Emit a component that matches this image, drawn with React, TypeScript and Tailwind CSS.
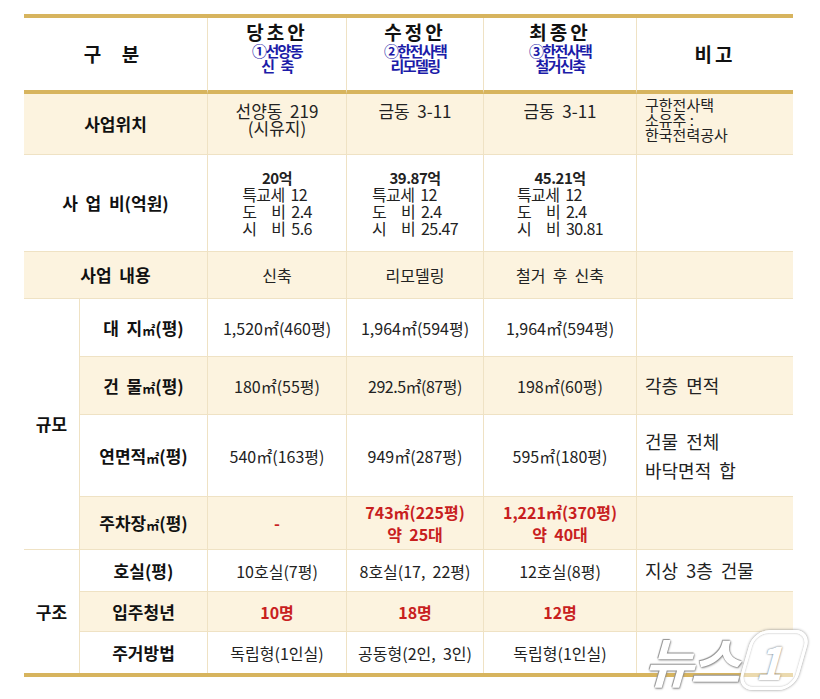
import type { ReactNode } from "react";

const KR = "font-['Noto_Sans_CJK_KR','Noto_Sans',sans-serif]";

interface CellProps {
  children?: ReactNode;
  className?: string;
}

function Cell({ children, className = "" }: CellProps) {
  return (
    <div
      className={`flex flex-col items-center justify-center border-r border-b border-[#efe2c4] text-center ${className}`}
    >
      {children}
    </div>
  );
}

function Head({ title, sub }: { title: string; sub: string[] }) {
  return (
    <Cell className="justify-start border-b-[4px] border-b-[#d7b45e] bg-white pt-[3px]">
      <span className="text-[19px] font-bold leading-[22px] tracking-[3px] text-[#111]">
        {title}
      </span>
      {sub.map((s) => (
        <span
          key={s}
          className="text-[15px] font-bold leading-[15px] tracking-[-1.6px] text-[#1c1ca8]"
        >
          {s}
        </span>
      ))}
    </Cell>
  );
}

function Cost({ total, city }: { total: string; city: string }) {
  return (
    <Cell className="bg-white text-[#222]">
      <span className="text-[15px] font-bold leading-[17px] tracking-[-0.5px]">
        {total}
      </span>
      <div className="whitespace-pre text-left text-[16px] leading-[17px] tracking-[-0.6px]">
        <div>{"특교세  12"}</div>
        <div>{"도     비  2.4"}</div>
        <div>{`시     비  ${city}`}</div>
      </div>
    </Cell>
  );
}

const label = "text-[17px] font-bold text-[#111]";
const val = "text-[16px] text-[#222]";
const red = "text-[16px] font-bold leading-[22px] text-[#c8201e]";
const beige = "bg-[#fcf3df]";

export default function App() {
  return (
    <div className={`relative h-[699px] w-[820px] bg-white ${KR}`}>
      <div className="pl-[24px] pt-[14px]">
        <div className="grid w-[769px] grid-cols-[56px_128px_139px_137px_153px_156px] grid-rows-[76px_61px_97px_47px_58px_58px_82px_53px_42px_40px_41px] border-y-[4px] border-[#d7b45e]">
          {/* header */}
          <Cell className="col-span-2 border-b-[4px] border-b-[#d7b45e] bg-white">
            <span className="text-[19px] font-bold tracking-[8px] text-[#111]">
              구 분
            </span>
          </Cell>
          <Head title="당초안" sub={["①선양동", "신\u00a0\u00a0\u00a0\u00a0축"]} />
          <Head title="수정안" sub={["②한전사택", "리모델링"]} />
          <Head title="최종안" sub={["③한전사택", "철거신축"]} />
          <Cell className="border-r-0 border-b-[4px] border-b-[#d7b45e] bg-white">
            <span className="text-[19px] font-bold tracking-[3px] text-[#111]">
              비고
            </span>
          </Cell>

          {/* 사업위치 */}
          <Cell className={`col-span-2 ${beige}`}>
            <span className={label}>사업위치</span>
          </Cell>
          <Cell className={`${beige} justify-start pt-[8px] text-[17px] leading-[17px] text-[#222]`}>
            <span>선양동&nbsp;&nbsp;219</span>
            <span>(시유지)</span>
          </Cell>
          <Cell className={`${beige} justify-start pt-[8px] text-[17px] leading-[17px] text-[#222]`}>
            금동&nbsp;&nbsp;3-11
          </Cell>
          <Cell className={`${beige} justify-start pt-[8px] text-[17px] leading-[17px] text-[#222]`}>
            금동&nbsp;&nbsp;3-11
          </Cell>
          <Cell className={`${beige} items-start justify-start border-r-0 pl-[8px] pt-[3px] text-left text-[15px] leading-[15px] text-[#222]`}>
            <span>구한전사택</span>
            <span>소유주 :</span>
            <span>한국전력공사</span>
          </Cell>

          {/* 사업비 */}
          <Cell className="col-span-2 bg-white">
            <span className={label}>
              사&nbsp;&nbsp;업&nbsp;&nbsp;비(억원)
            </span>
          </Cell>
          <Cost total="20억" city="5.6" />
          <Cost total="39.87억" city="25.47" />
          <Cost total="45.21억" city="30.81" />
          <Cell className="border-r-0 bg-white" />

          {/* 사업내용 */}
          <Cell className={`col-span-2 ${beige}`}>
            <span className={label}>사업&nbsp;&nbsp;내용</span>
          </Cell>
          <Cell className={beige}>
            <span className={val}>신축</span>
          </Cell>
          <Cell className={beige}>
            <span className={val}>리모델링</span>
          </Cell>
          <Cell className={beige}>
            <span className={val}>철거&nbsp;&nbsp;후&nbsp;&nbsp;신축</span>
          </Cell>
          <Cell className={`${beige} border-r-0`} />

          {/* 규모 */}
          <Cell className="row-span-4 bg-white">
            <span className={label}>규모</span>
          </Cell>
          <Cell className="bg-white">
            <span className={label}>
              대&nbsp;&nbsp;지<span className="text-[13px]">㎡</span>(평)
            </span>
          </Cell>
          <Cell className="bg-white">
            <span className={val}>1,520㎡(460평)</span>
          </Cell>
          <Cell className="bg-white">
            <span className={val}>1,964㎡(594평)</span>
          </Cell>
          <Cell className="bg-white">
            <span className={val}>1,964㎡(594평)</span>
          </Cell>
          <Cell className="border-r-0 bg-white" />

          <Cell className={beige}>
            <span className={label}>
              건&nbsp;&nbsp;물<span className="text-[13px]">㎡</span>(평)
            </span>
          </Cell>
          <Cell className={beige}>
            <span className={val}>180㎡(55평)</span>
          </Cell>
          <Cell className={beige}>
            <span className={`${val} tracking-[-0.5px]`}>292.5㎡(87평)</span>
          </Cell>
          <Cell className={beige}>
            <span className={val}>198㎡(60평)</span>
          </Cell>
          <Cell className={`${beige} items-start border-r-0 pl-[8px]`}>
            <span className="text-[18px] text-[#222]">각층&nbsp;&nbsp;면적</span>
          </Cell>

          <Cell className="bg-white">
            <span className={label}>
              연면적<span className="text-[13px]">㎡</span>(평)
            </span>
          </Cell>
          <Cell className="bg-white">
            <span className={val}>540㎡(163평)</span>
          </Cell>
          <Cell className="bg-white">
            <span className={val}>949㎡(287평)</span>
          </Cell>
          <Cell className="bg-white">
            <span className={val}>595㎡(180평)</span>
          </Cell>
          <Cell className="items-start border-r-0 bg-white pl-[8px] text-left text-[18px] leading-[29px] text-[#222]">
            <span>건물&nbsp;&nbsp;전체</span>
            <span>바닥면적&nbsp;&nbsp;합</span>
          </Cell>

          <Cell className={beige}>
            <span className={label}>
              주차장<span className="text-[13px]">㎡</span>(평)
            </span>
          </Cell>
          <Cell className={beige}>
            <span className="text-[16px] font-bold text-[#c8201e]">-</span>
          </Cell>
          <Cell className={beige}>
            <span className={red}>743㎡(225평)</span>
            <span className={red}>약&nbsp;&nbsp;25대</span>
          </Cell>
          <Cell className={beige}>
            <span className={red}>1,221㎡(370평)</span>
            <span className={red}>약&nbsp;&nbsp;40대</span>
          </Cell>
          <Cell className={`${beige} border-r-0`} />

          {/* 구조 */}
          <Cell className="row-span-3 border-b-0 bg-white">
            <span className={label}>구조</span>
          </Cell>
          <Cell className="bg-white">
            <span className={label}>호실(평)</span>
          </Cell>
          <Cell className="bg-white">
            <span className={val}>10호실(7평)</span>
          </Cell>
          <Cell className="bg-white">
            <span className={val}>8호실(17,&nbsp;&nbsp;22평)</span>
          </Cell>
          <Cell className="bg-white">
            <span className={val}>12호실(8평)</span>
          </Cell>
          <Cell className="items-start border-r-0 bg-white pl-[8px]">
            <span className="text-[18px] text-[#222]">지상&nbsp;&nbsp;3층&nbsp;&nbsp;건물</span>
          </Cell>

          <Cell className={beige}>
            <span className={label}>입주청년</span>
          </Cell>
          <Cell className={beige}>
            <span className="text-[16px] font-bold text-[#c8201e]">10명</span>
          </Cell>
          <Cell className={beige}>
            <span className="text-[16px] font-bold text-[#c8201e]">18명</span>
          </Cell>
          <Cell className={beige}>
            <span className="text-[16px] font-bold text-[#c8201e]">12명</span>
          </Cell>
          <Cell className={`${beige} border-r-0`} />

          <Cell className="border-b-0 bg-white">
            <span className={label}>주거방법</span>
          </Cell>
          <Cell className="border-b-0 bg-white">
            <span className={val}>독립형(1인실)</span>
          </Cell>
          <Cell className="border-b-0 bg-white">
            <span className={val}>공동형(2인,&nbsp;&nbsp;3인)</span>
          </Cell>
          <Cell className="border-b-0 bg-white">
            <span className={val}>독립형(1인실)</span>
          </Cell>
          <Cell className="border-r-0 border-b-0 bg-white" />
        </div>
      </div>

      {/* 뉴스1 watermark */}
      <div className="absolute left-[650px] top-[630px] flex items-center">
        <span className="skew-x-[-16deg] text-[54px] font-bold leading-none tracking-[-3px] text-white [text-shadow:0_0_1px_#666,1px_1px_2px_#888,-1px_-1px_1px_#999]">
          뉴스
        </span>
        <span className="ml-[2px] flex h-[60px] w-[58px] skew-x-[-16deg] items-center justify-center rounded-[16px] border-[3px] border-white bg-white/50 shadow-[0_0_3px_#888,inset_0_0_2px_#aaa]">
          <span className="text-[46px] font-bold leading-none text-white [text-shadow:0_0_2px_#555]">
            1
          </span>
        </span>
      </div>
    </div>
  );
}
